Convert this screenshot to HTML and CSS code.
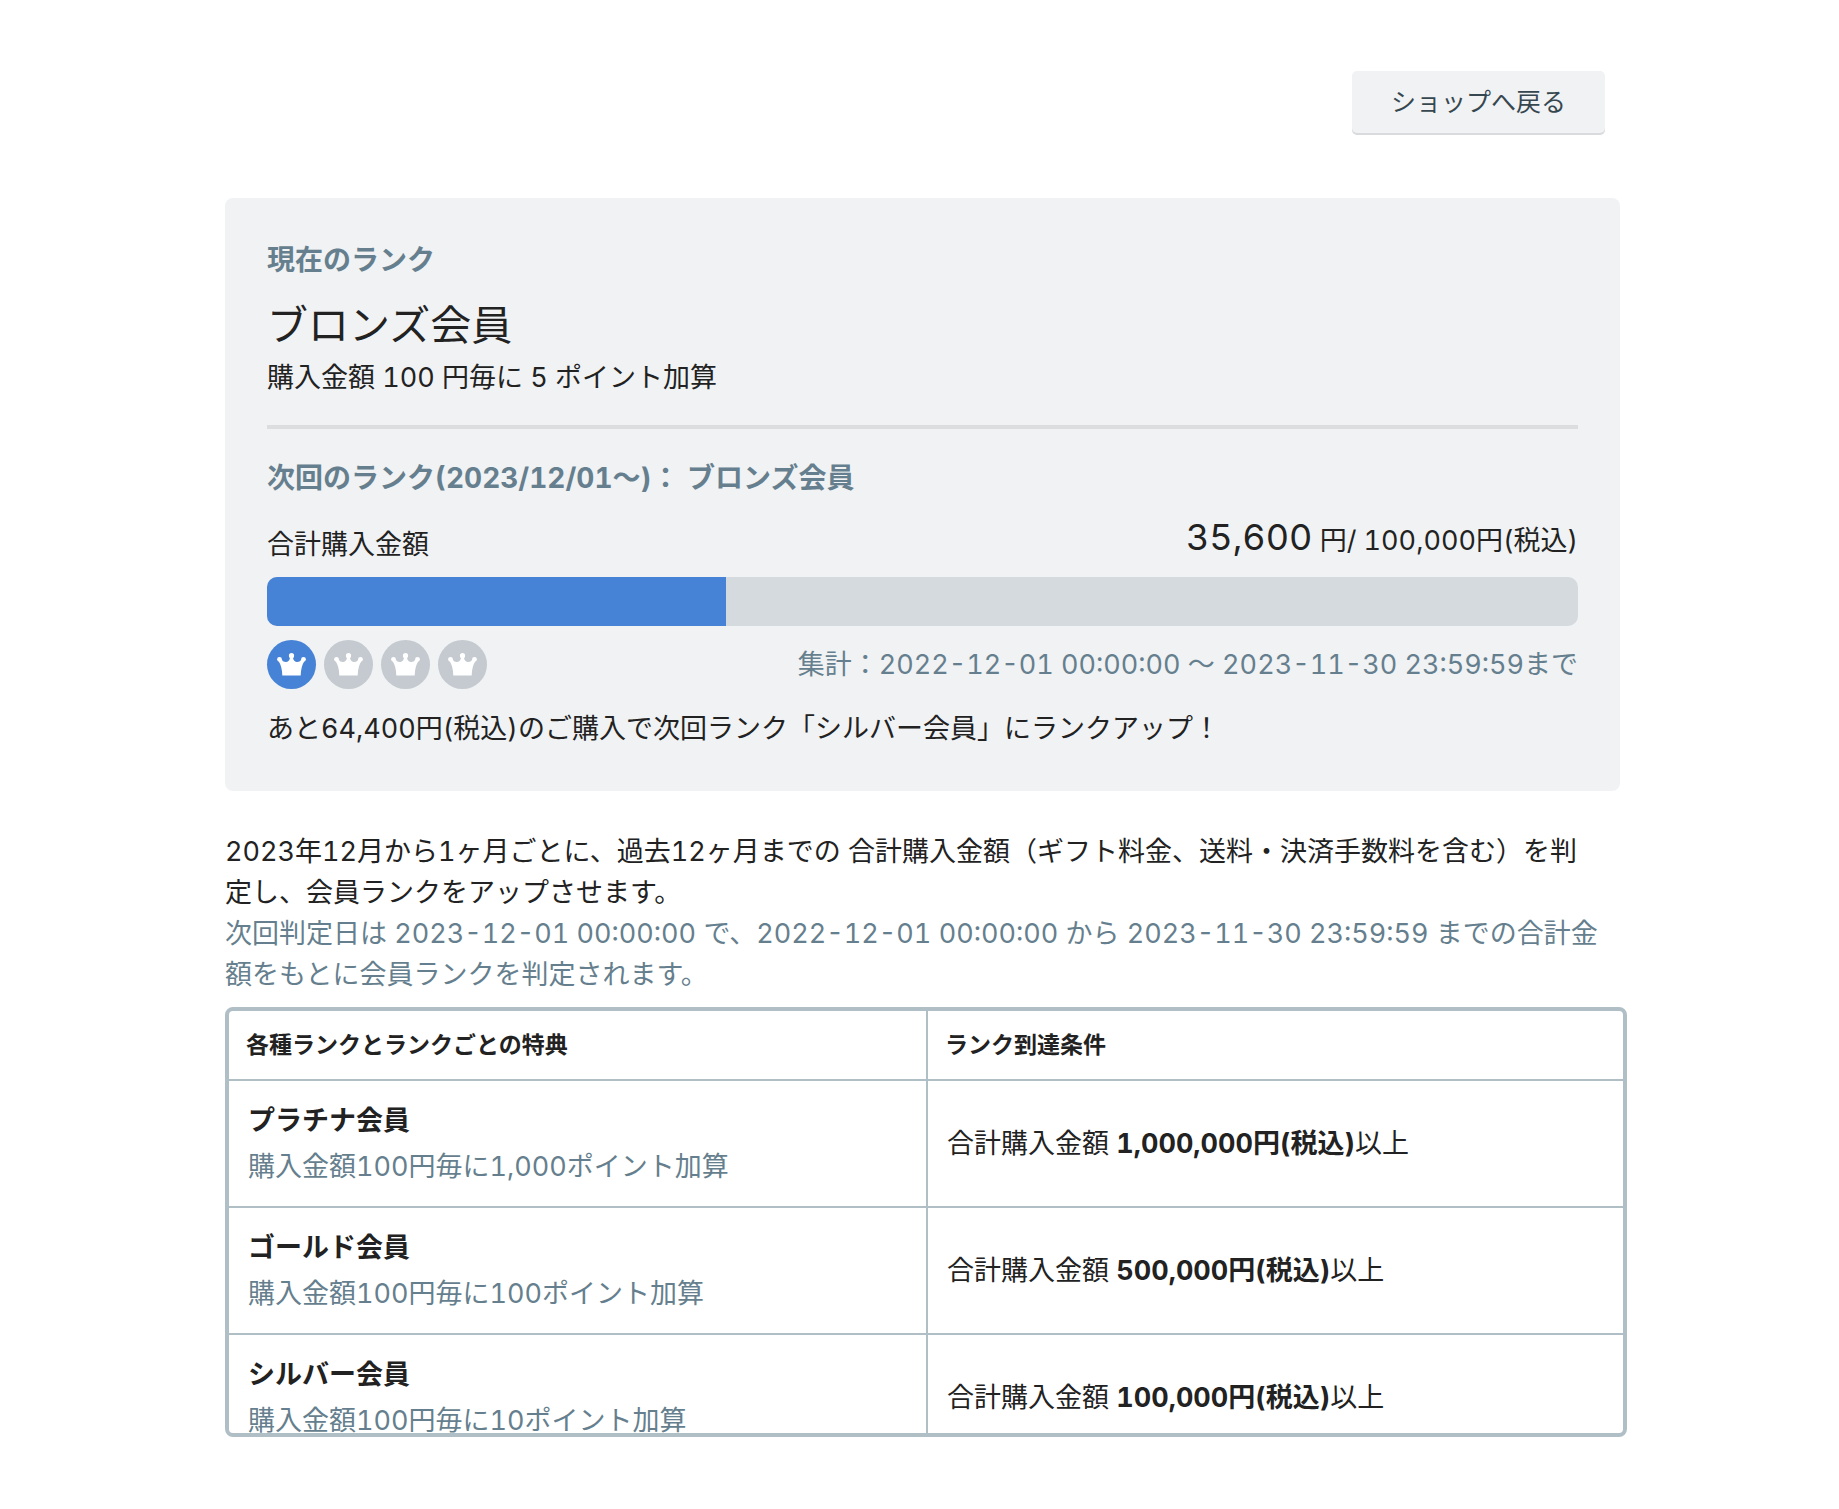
FILE: index.html
```html
<!DOCTYPE html>
<html lang="ja">

<head>
  <meta charset="UTF-8">
  <meta name="viewport" content="width=device-width, initial-scale=1.0">
  <title>会員ランク</title>
  <link rel="stylesheet" href="styles.css">
</head>

<body>
  <svg width="0" height="0" class="sprite" aria-hidden="true">
    <symbol id="crown" viewBox="0 0 29 23">
      <circle cx="2.500" cy="6.300" r="2.400" />
      <circle cx="14.500" cy="2.700" r="2.600" />
      <circle cx="26.500" cy="6.300" r="2.400" />
      <path d="M5.300 22.600 Q5.200 13.500 1.500 8 L4.400 6.500 Q6.500 9.300 9.300 9 Q12.700 8.600 13.200 3.500 L15.800 3.500 Q16.300 8.600 19.700 9 Q22.500 9.300 24.600 6.500 L27.500 8 Q23.800 13.500 23.700 22.600 Z" />
    </symbol>
  </svg>

  <div class="page">
    <header class="page-header">
      <button type="button" class="back-button">ショップへ戻る</button>
    </header>

    <section class="rank-card">
      <h2 class="rank-label">現在のランク</h2>
      <p class="rank-name">ブロンズ会員</p>
      <p class="rank-point">購入金額 100 円毎に 5 ポイント加算</p>
      <hr class="divider">
      <h2 class="rank-label">次回のランク(2023/12/01〜)： ブロンズ会員</h2>
      <div class="total">
        <span>合計購入金額</span>
        <span class="total-value"><span class="total-current">35,600</span> 円/ 100,000円(税込)</span>
      </div>
      <div class="progress">
        <div class="progress-bar" style="width: 35%"></div>
      </div>
      <div class="period">
        <ul class="crowns">
          <li class="crown active"><svg><use href="#crown" /></svg></li>
          <li class="crown"><svg><use href="#crown" /></svg></li>
          <li class="crown"><svg><use href="#crown" /></svg></li>
          <li class="crown"><svg><use href="#crown" /></svg></li>
        </ul>
        <span class="muted">集計：2022-12-01 00:00:00 〜 2023-11-30 23:59:59まで</span>
      </div>
      <p class="rank-next">あと64,400円(税込)のご購入で次回ランク「シルバー会員」にランクアップ！</p>
    </section>

    <div class="description">
      <p>2023年12月から1ヶ月ごとに、過去12ヶ月までの 合計購入金額（ギフト料金、送料・決済手数料を含む）を判<br>定し、会員ランクをアップさせます。</p>
      <p class="muted">次回判定日は 2023-12-01 00:00:00 で、2022-12-01 00:00:00 から 2023-11-30 23:59:59 までの合計金額をもとに会員ランクを判定されます。</p>
    </div>

    <div class="table-wrap">
      <table class="rank-table">
        <thead>
          <tr>
            <th>各種ランクとランクごとの特典</th>
            <th>ランク到達条件</th>
          </tr>
        </thead>
        <tbody>
          <tr>
            <td>
              <strong>プラチナ会員</strong>
              <p class="muted">購入金額100円毎に1,000ポイント加算</p>
            </td>
            <td>合計購入金額 <strong>1,000,000円(税込)</strong>以上</td>
          </tr>
          <tr>
            <td>
              <strong>ゴールド会員</strong>
              <p class="muted">購入金額100円毎に100ポイント加算</p>
            </td>
            <td>合計購入金額 <strong>500,000円(税込)</strong>以上</td>
          </tr>
          <tr>
            <td>
              <strong>シルバー会員</strong>
              <p class="muted">購入金額100円毎に10ポイント加算</p>
            </td>
            <td>合計購入金額 <strong>100,000円(税込)</strong>以上</td>
          </tr>
        </tbody>
      </table>
    </div>
  </div>
</body>

</html>
```
FILE: styles.css
```css
* {
  box-sizing: border-box;
}

body {
  margin: 0;
  background-color: #fff;
  color: #222;
  font-family: Inter, "Noto Sans CJK JP", sans-serif;
  font-size: 27px;
  line-height: 41px;
  font-variant-numeric: tabular-nums;
}

h2,
p,
ul {
  margin: 0;
  padding: 0;
}

.sprite {
  position: absolute;
}

.page {
  padding: 71px 212px 60px 225px;
}

.page-header {
  display: flex;
  justify-content: flex-end;
  margin: 0 22px 65px 0;
}

.back-button {
  padding: 11px 39px;
  border: none;
  border-radius: 5px;
  background-color: #f0f2f4;
  box-shadow: 0 2px 0 #d8dadd;
  color: #37474f;
  font-family: inherit;
  font-size: 25px;
  line-height: 40px;
  cursor: pointer;
}

.rank-card {
  margin-right: 7px;
  padding: 42px;
  border-radius: 8px;
  background-color: #f0f2f4;
}

.rank-label {
  color: #667f8e;
  font-size: 28px;
  font-weight: bold;
}

.rank-name {
  margin-top: 14px;
  font-size: 41px;
  line-height: 60px;
}

.rank-point {
  margin-top: 2px;
}

.divider {
  height: 4px;
  margin: 27px 0 29px;
  border: none;
  background-color: #dbdddf;
}

.total {
  display: flex;
  justify-content: space-between;
  align-items: flex-end;
  margin-top: 18px;
}

.total-value {
  padding-bottom: 4px;
}

.total-current {
  font-size: 36px;
}

.progress {
  overflow: hidden;
  height: 49px;
  margin-top: 12px;
  border-radius: 10px;
  background-color: #d5dadf;
}

.progress-bar {
  height: 100%;
  background-color: #4683d6;
}

.period {
  display: flex;
  justify-content: space-between;
  align-items: center;
  margin-top: 14px;
}

.crowns {
  display: flex;
  gap: 8px;
  list-style: none;
}

.crown {
  display: flex;
  justify-content: center;
  align-items: center;
  width: 49px;
  height: 49px;
  border-radius: 50%;
  background-color: #c4cad0;
}

.crown.active {
  background-color: #4683d6;
}

.crown svg {
  width: 29px;
  height: 23px;
  fill: #fff;
}

.muted {
  color: #667f8e;
}

.rank-next {
  margin-top: 19px;
}

.description {
  margin: 40px 7px 12px 0;
}

.table-wrap {
  overflow: hidden;
  max-height: 430px;
  border: 4px solid #b0bec5;
  border-radius: 8px;
}

.rank-table {
  width: 100%;
  border-spacing: 0;
  table-layout: fixed;
}

.rank-table th {
  padding: 14px 17px;
  font-size: 23px;
  line-height: 40px;
  text-align: left;
}

.rank-table td {
  padding: 19px;
  border-top: 2px solid #b0bec5;
}

.rank-table th + th,
.rank-table td + td {
  border-left: 2px solid #b0bec5;
}

.rank-table td p {
  margin-top: 5px;
}
```
